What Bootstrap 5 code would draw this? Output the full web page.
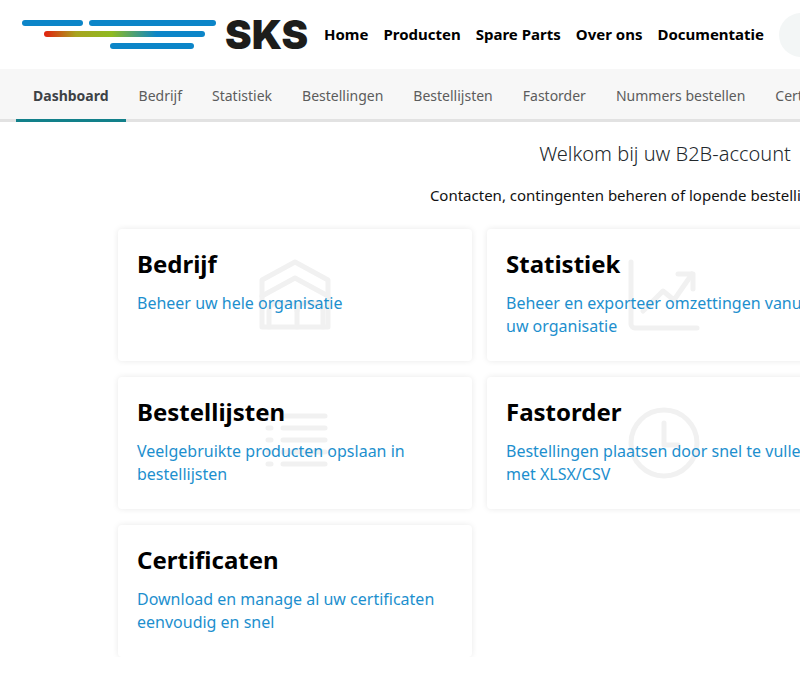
<!DOCTYPE html>
<html lang="nl">
<head>
    <meta charset="UTF-8" />
    <meta name="viewport" content="width=device-width, initial-scale=1.0" />
    <title>SKS B2B-account</title>
    <link href="https://cdn.jsdelivr.net/npm/bootstrap@5.3.2/dist/css/bootstrap.min.css" rel="stylesheet" />
    <style>
        html, body {
            overflow: hidden;
        }

        body {
            font-family: "Noto Sans", sans-serif;
            background-color: #fff;
        }

        .page-wrap {
            width: 1330px;
        }

        .top-bar {
            height: 69px;
            padding-left: 22px;
        }

        .logo-bars {
            width: 194px;
            height: 29px;
        }

        .logo-name {
            font-family: "Inter", sans-serif;
            font-weight: 900;
            font-size: 40px;
            line-height: 29px;
            letter-spacing: 0;
            color: #1d1d1b;
            margin-left: 9px;
            width: 80px;
        }

        .main-links {
            margin-left: 19px;
            gap: 15px;
        }

        .main-links a {
            color: #000;
            font-weight: 700;
            font-size: 15px;
            text-decoration: none;
        }

        .avatar-circle {
            width: 44px;
            height: 44px;
            border-radius: 50%;
            background-color: #f3f6f6;
            margin-left: 15px;
            flex-shrink: 0;
        }

        .sub-bar {
            height: 53px;
            background-color: #f7f7f7;
            border-bottom: 3px solid #e2e2e2;
            padding-left: 16px;
        }

        .sub-bar a {
            display: block;
            height: 53px;
            line-height: 54px;
            padding: 0 15px;
            color: #5c5c5c;
            font-size: 14px;
            text-decoration: none;
            white-space: nowrap;
        }

        .sub-bar a.is-current {
            padding: 0 17px;
            margin-right: -2px;
            color: #3d4246;
            font-weight: 700;
            border-bottom: 3px solid #12808a;
        }

        .welcome-title {
            font-size: 20px;
            font-weight: 300;
            line-height: 24px;
            color: #22282c;
            margin: 20px 0 0;
        }

        .welcome-text {
            font-size: 15px;
            line-height: 24px;
            color: #111;
            margin: 17px 0 22px;
        }

        .tile-grid {
            width: 1107px;
            margin-left: 118px;
            display: grid;
            grid-template-columns: repeat(3, 354px);
            gap: 15px;
        }

        .tile {
            position: relative;
            height: 132px;
            padding: 19px;
            background-color: #fff;
            border-radius: 4px;
            box-shadow: 0 0 6px rgba(0, 0, 0, 0.09);
        }

        .tile h3 {
            position: relative;
            font-size: 24px;
            font-weight: 700;
            line-height: 32px;
            color: #000;
            margin: 0 0 12px;
        }

        .tile a {
            position: relative;
            display: block;
            font-size: 16px;
            line-height: 23px;
            color: #1d8fce;
            text-decoration: none;
        }

        .tile svg {
            position: absolute;
            left: 50%;
            top: 50%;
            width: 72px;
            height: 72px;
            transform: translate(-50%, -50%);
            fill: none;
            stroke: #f1f1f1;
            stroke-width: 5;
            stroke-linecap: round;
            stroke-linejoin: round;
        }
    </style>
</head>

<body>
    <div class="page-wrap">
        <header class="top-bar d-flex align-items-center">
            <svg class="logo-bars" viewBox="0 0 194 29" aria-hidden="true">
                <defs>
                    <linearGradient id="barGrad" x1="0" x2="1" y1="0" y2="0">
                        <stop offset="0" stop-color="#e2200f" />
                        <stop offset="0.2" stop-color="#a8a41f" />
                        <stop offset="0.42" stop-color="#8fbb22" />
                        <stop offset="0.7" stop-color="#0c85c8" />
                        <stop offset="1" stop-color="#0c85c8" />
                    </linearGradient>
                </defs>
                <rect x="0" y="0" width="61" height="6" rx="3" fill="#0c85c8" />
                <rect x="67" y="0" width="127" height="6" rx="3" fill="#0c85c8" />
                <rect x="22" y="11" width="161" height="6" rx="3" fill="url(#barGrad)" />
                <rect x="88" y="23" width="84" height="6" rx="3" fill="#0c85c8" />
            </svg>
            <span class="logo-name">SKS</span>
            <nav class="main-links d-flex">
                <a href="#">Home</a>
                <a href="#">Producten</a>
                <a href="#">Spare Parts</a>
                <a href="#">Over ons</a>
                <a href="#">Documentatie</a>
            </nav>
            <div class="avatar-circle"></div>
        </header>

        <nav class="sub-bar d-flex">
            <a class="is-current" href="#">Dashboard</a>
            <a href="#">Bedrijf</a>
            <a href="#">Statistiek</a>
            <a href="#">Bestellingen</a>
            <a href="#">Bestellijsten</a>
            <a href="#">Fastorder</a>
            <a href="#">Nummers bestellen</a>
            <a href="#">Certificaten</a>
        </nav>

        <main>
            <div class="text-center">
                <h1 class="welcome-title">Welkom bij uw B2B-account</h1>
                <p class="welcome-text">Contacten, contingenten beheren of lopende bestellingen bekijken</p>
            </div>

            <div class="tile-grid">
                <div class="tile">
                    <svg viewBox="0 0 72 72" aria-hidden="true">
                        <path d="M3 68V21L36 3l33 18v47z" />
                        <path d="M3 37l33-18 33 18" />
                        <path d="M10 68V52a8 8 0 0 1 8-8h14a6 6 0 0 1 6 6v18" />
                        <path d="M38 52a8 8 0 0 1 8-8h10a8 8 0 0 1 8 8v16" />
                    </svg>
                    <h3>Bedrijf</h3>
                    <a href="#">Beheer uw hele organisatie</a>
                </div>
                <div class="tile">
                    <svg viewBox="0 0 72 72" aria-hidden="true">
                        <path d="M3 3v62a4 4 0 0 0 4 4h62" />
                        <path d="M15 52l20-20 11 9 18-26" />
                        <path d="M50 15h15v15" />
                    </svg>
                    <h3>Statistiek</h3>
                    <a href="#">Beheer en exporteer omzettingen vanuit uw organisatie</a>
                </div>
                <div class="tile"></div>
            </div>

            <div class="tile-grid mt-3">
                <div class="tile">
                    <svg viewBox="0 0 72 72" aria-hidden="true">
                        <path d="M9 9h3M24 9h42M9 21h3M24 21h42M9 33h3M24 33h42M9 45h3M24 45h42M9 57h3M24 57h42" />
                    </svg>
                    <h3>Bestellijsten</h3>
                    <a href="#">Veelgebruikte producten opslaan in bestellijsten</a>
                </div>
                <div class="tile">
                    <svg viewBox="0 0 72 72" aria-hidden="true">
                        <circle cx="36" cy="36" r="33" />
                        <path d="M36 16v22h14" />
                    </svg>
                    <h3>Fastorder</h3>
                    <a href="#">Bestellingen plaatsen door snel te vullen met XLSX/CSV</a>
                </div>
                <div class="tile"></div>
            </div>

            <div class="tile-grid mt-3">
                <div class="tile">
                    <h3>Certificaten</h3>
                    <a href="#">Download en manage al uw certificaten eenvoudig en snel</a>
                </div>
            </div>
        </main>
    </div>

    <script src="https://cdn.jsdelivr.net/npm/bootstrap@5.3.2/dist/js/bootstrap.bundle.min.js"></script>
</body>

</html>
